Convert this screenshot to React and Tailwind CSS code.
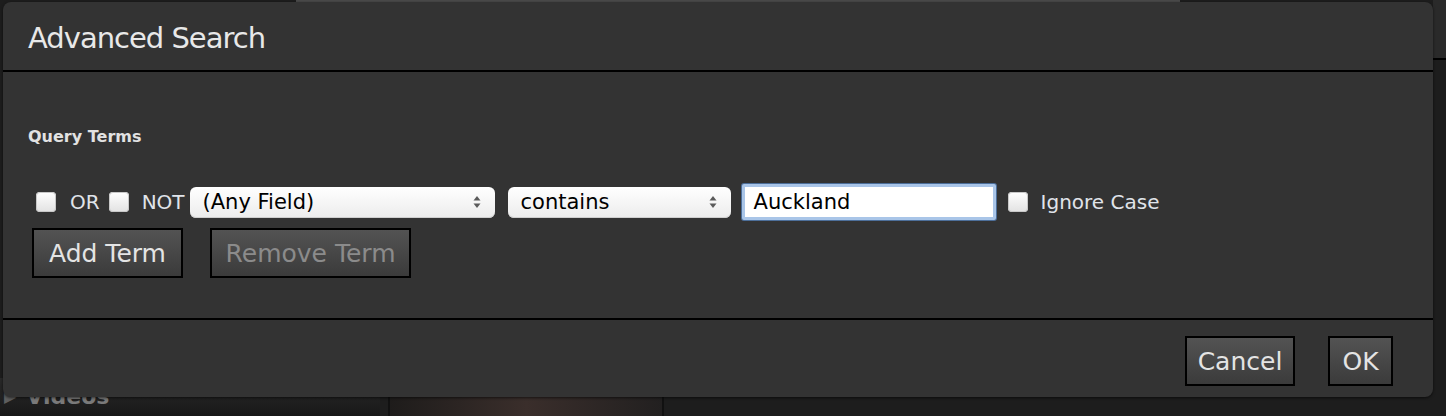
import React from "react";

function Checkbox() {
  return (
    <div className="w-[20px] h-[20px] shrink-0 rounded-[4px] bg-linear-to-b from-[#ffffff] to-[#e2e2e2] shadow-[inset_0_0_0_1px_#c8c8c8]" />
  );
}

function UpDown() {
  return (
    <svg width="8" height="14" viewBox="0 0 8 14" className="shrink-0">
      <path d="M4 1 L7.5 5.5 L0.5 5.5 Z" fill="#5a5a5a" />
      <path d="M4 13 L7.5 8.5 L0.5 8.5 Z" fill="#5a5a5a" />
    </svg>
  );
}

function Select({ label, width }) {
  return (
    <div
      className={`${width} h-[31px] shrink-0 rounded-[6px] bg-linear-to-b from-[#ffffff] to-[#ececec] flex items-center justify-between pl-[13px] pr-[14px] shadow-[inset_0_-1px_0_#cfcfcf]`}
    >
      <span className="text-[21px] leading-none text-black">{label}</span>
      <UpDown />
    </div>
  );
}

function Btn({ children, width, muted }) {
  return (
    <div
      className={`${width} h-[50px] shrink-0 border-2 border-black bg-linear-to-b from-[#535353] to-[#3b3b3b] flex items-center justify-center text-[25px] leading-none ${
        muted ? "text-[#8b8b8b]" : "text-[#e4e4e4]"
      }`}
    >
      {children}
    </div>
  );
}

export default function App() {
  return (
    <div className="relative w-[1446px] h-[416px] overflow-hidden bg-[#1d1d1d] font-['DejaVu_Sans',sans-serif]">
      {/* background app content peeking out */}
      <div className="absolute left-[296px] top-0 w-[884px] h-[3px] bg-[#4a4a4a]" />
      <div className="absolute left-[1433px] top-0 w-[13px] h-[58px] bg-[#2a2a2a]" />
      <div className="absolute left-[1433px] top-[58px] w-[13px] h-[2px] bg-black" />
      <div className="absolute left-0 top-[378px] w-[380px] h-[38px] bg-linear-to-b from-[#2a2a2a] to-[#181818] flex items-center gap-[10px] pl-[4px]">
        <span className="text-[#5e5e5e] text-[16px] leading-none">▶</span>
        <span className="text-[#7a7a7a] text-[22px] font-bold leading-none">Videos</span>
      </div>
      <div className="absolute left-[388px] top-[380px] w-[276px] h-[40px] border-2 border-[#111] bg-linear-to-r from-[#1e1c1b] via-[#3a2e2b] to-[#222020]" />

      {/* dialog */}
      <div className="absolute left-[3px] top-[2px] w-[1430px] h-[395px] rounded-[8px] bg-[#333333] flex flex-col shadow-[0_1px_3px_rgba(0,0,0,0.6)]">
        <div className="h-[70px] shrink-0 border-b-2 border-black pl-[25px] pt-[19px]">
          <h1 className="text-[29px] leading-[34px] tracking-[-1px] text-[#e8e8e8] font-normal">
            Advanced Search
          </h1>
        </div>

        <div className="flex-1 pl-[25px] pt-[55px] flex flex-col">
          <div className="text-[16px] leading-[20px] font-bold text-[#e2e2e2]">Query Terms</div>

          <div className="mt-[36px] ml-[8px] h-[38px] flex items-center">
            <Checkbox />
            <span className="ml-[14px] text-[20px] leading-none text-[#e0e4ea]">OR</span>
            <div className="ml-[9px]">
              <Checkbox />
            </div>
            <span className="ml-[13px] text-[20px] leading-none text-[#e0e4ea]">NOT</span>
            <div className="ml-[5px]">
              <Select label="(Any Field)" width="w-[305px]" />
            </div>
            <div className="ml-[13px]">
              <Select label="contains" width="w-[223px]" />
            </div>
            <div className="ml-[10px] w-[256px] h-[38px] rounded-[3px] bg-[#4d6f9a] p-[1px]">
              <div className="w-full h-full rounded-[2px] border-[3px] border-[#a9c5e8] bg-white flex items-center pl-[9px]">
                <span className="text-[21px] leading-none text-black">Auckland</span>
              </div>
            </div>
            <div className="ml-[11px]">
              <Checkbox />
            </div>
            <span className="ml-[13px] text-[20px] leading-none text-[#e0e4ea]">Ignore Case</span>
          </div>

          <div className="mt-[7px] ml-[4px] flex items-center gap-[27px]">
            <Btn width="w-[151px]">Add Term</Btn>
            <Btn width="w-[201px]" muted>
              Remove Term
            </Btn>
          </div>
        </div>

        <div className="h-[79px] shrink-0 border-t-2 border-black flex items-start justify-end pt-[16px] pr-[40px] gap-[33px]">
          <Btn width="w-[110px]">Cancel</Btn>
          <Btn width="w-[65px]">OK</Btn>
        </div>
      </div>
    </div>
  );
}
